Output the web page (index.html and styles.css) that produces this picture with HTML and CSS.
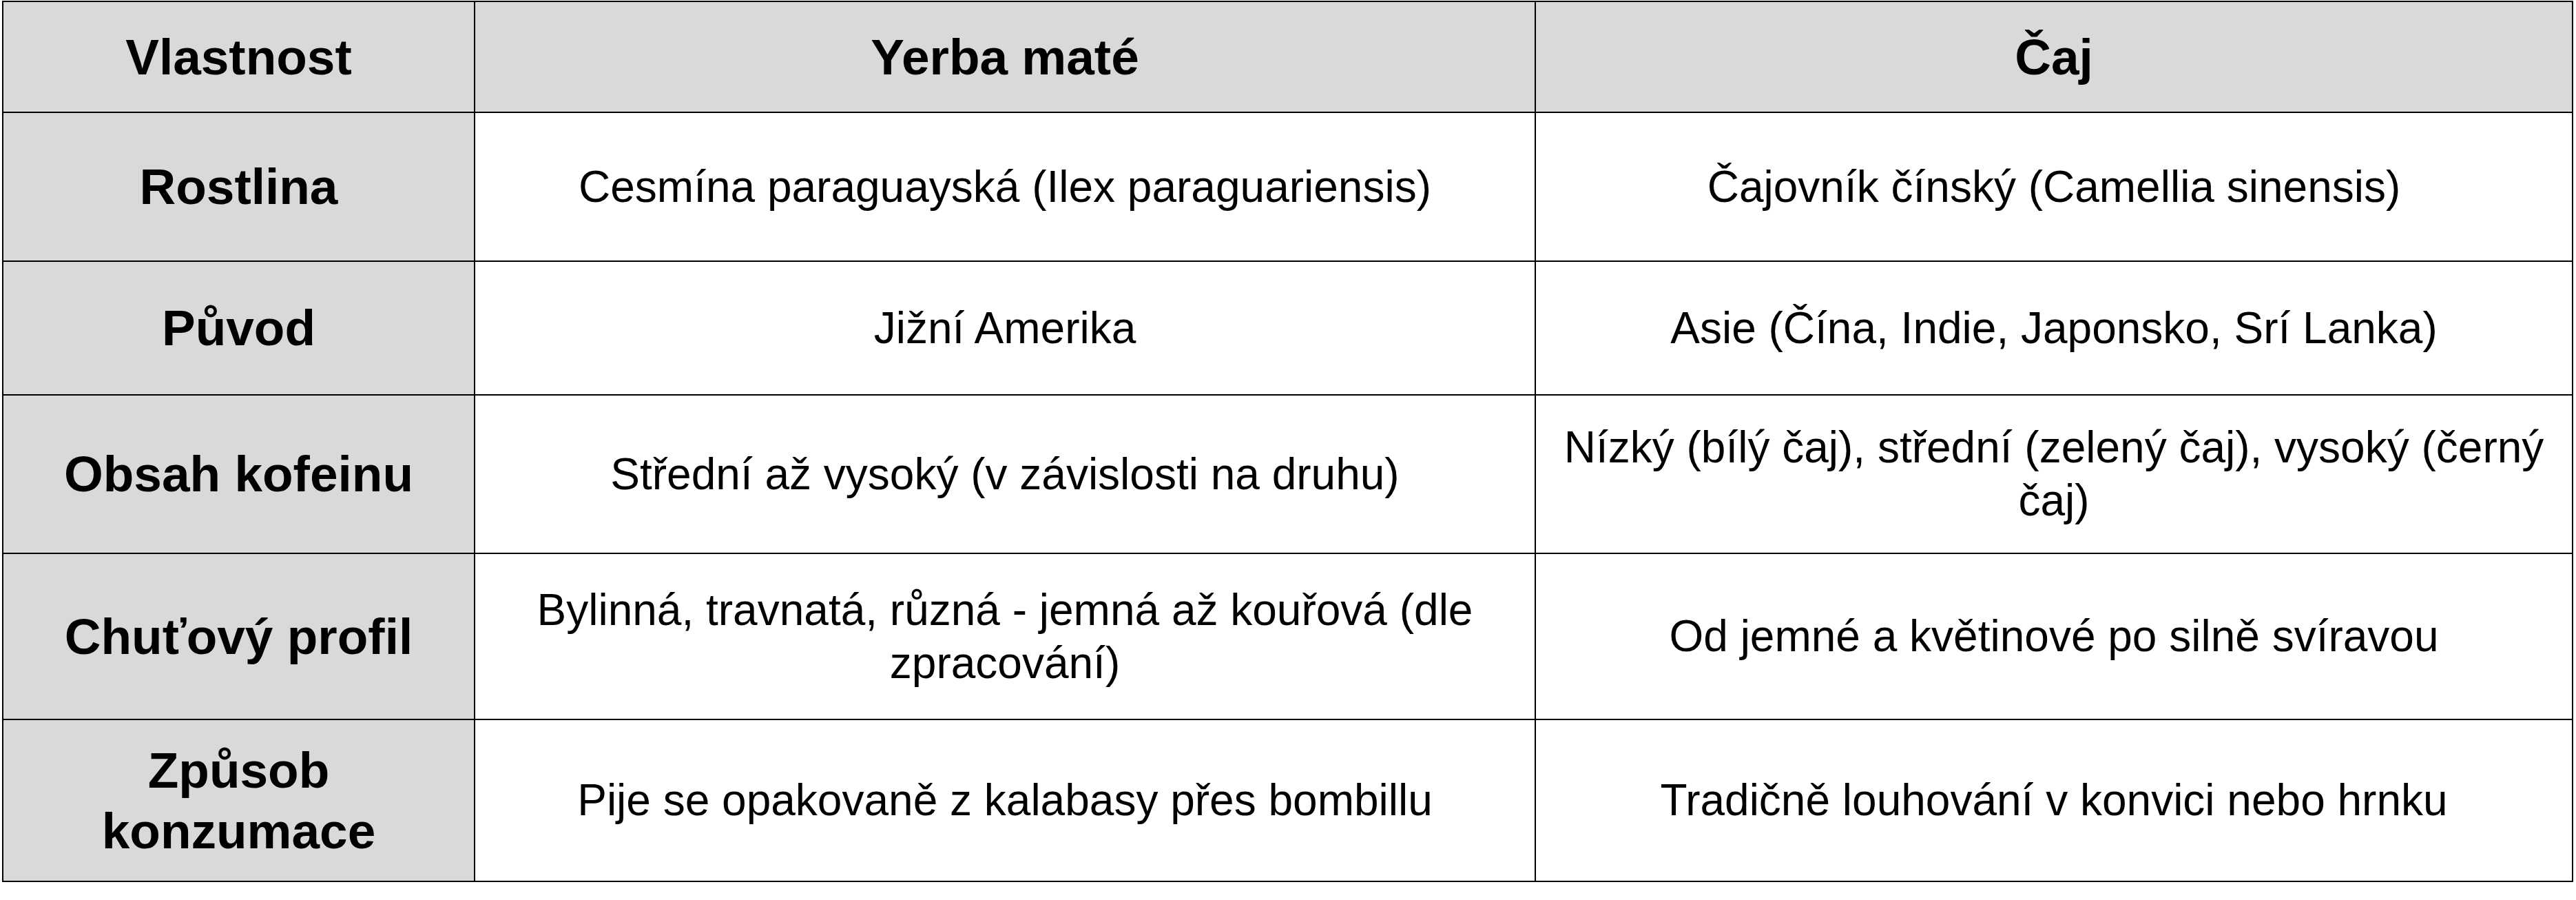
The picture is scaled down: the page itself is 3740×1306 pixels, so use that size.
FILE: index.html
```html
<!DOCTYPE html>
<html lang="cs">
<head>
<meta charset="utf-8">
<title>Yerba maté vs. čaj</title>
<link rel="stylesheet" href="styles.css">
</head>
<body>
<div class="table" role="table">
  <div class="cell head" role="columnheader">Vlastnost</div>
  <div class="cell head" role="columnheader">Yerba maté</div>
  <div class="cell head" role="columnheader">Čaj</div>

  <div class="cell key" role="rowheader">Rostlina</div>
  <div class="cell" role="cell">Cesmína paraguayská (Ilex paraguariensis)</div>
  <div class="cell" role="cell">Čajovník čínský (Camellia sinensis)</div>

  <div class="cell key" role="rowheader">Původ</div>
  <div class="cell" role="cell">Jižní Amerika</div>
  <div class="cell" role="cell">Asie (Čína, Indie, Japonsko, Srí Lanka)</div>

  <div class="cell key" role="rowheader">Obsah kofeinu</div>
  <div class="cell" role="cell">Střední až vysoký (v závislosti na druhu)</div>
  <div class="cell" role="cell">Nízký (bílý čaj), střední (zelený čaj), vysoký (černý čaj)</div>

  <div class="cell key" role="rowheader">Chuťový profil</div>
  <div class="cell" role="cell">Bylinná, travnatá, různá - jemná až kouřová (dle zpracování)</div>
  <div class="cell" role="cell">Od jemné a květinové po silně svíravou</div>

  <div class="cell key" role="rowheader">Způsob konzumace</div>
  <div class="cell" role="cell">Pije se opakovaně z kalabasy přes bombillu</div>
  <div class="cell" role="cell">Tradičně louhování v konvici nebo hrnku</div>
</div>
</body>
</html>
```
FILE: styles.css
```css
html, body {
  margin: 0;
  padding: 0;
  background: #ffffff;
}

body {
  font-family: "Liberation Sans", Arial, Helvetica, sans-serif;
  color: #000000;
}

.table {
  display: grid;
  grid-template-columns: 685px 1540px 1506px;
  grid-template-rows: 161px 216px 194px 230px 241px 235px;
  width: max-content;
  margin: 1px 0 0 3px;
  border-top: 2px solid #000;
  border-left: 2px solid #000;
}

.cell {
  box-sizing: border-box;
  display: flex;
  align-items: center;
  justify-content: center;
  text-align: center;
  padding: 0 20px;
  border-right: 2px solid #000;
  border-bottom: 2px solid #000;
  font-size: 64px;
  line-height: 1.2;
  background: #ffffff;
}

.head,
.key {
  font-weight: bold;
  font-size: 73px;
  background: #d9d9d9;
}
```
